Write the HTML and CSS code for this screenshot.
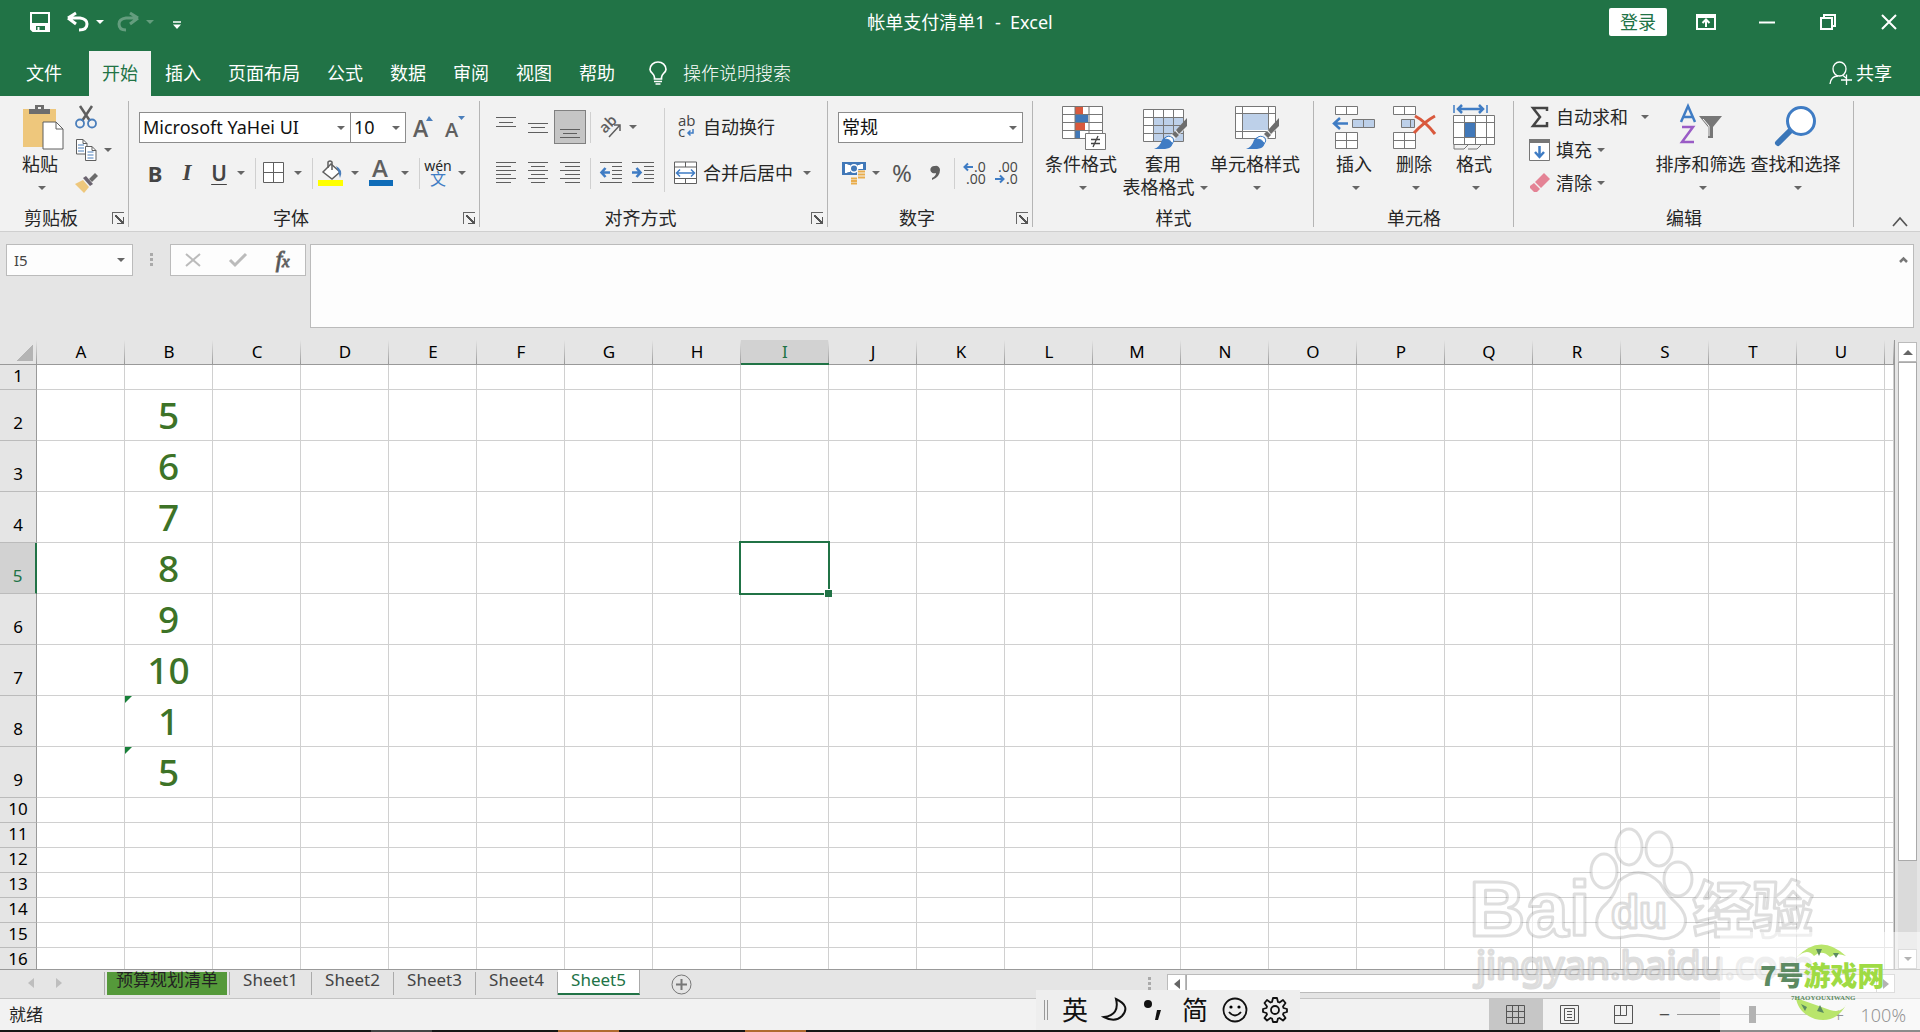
FILE: index.html
```html
<!DOCTYPE html>
<html lang="zh-CN">
<head>
<meta charset="utf-8">
<title>帐单支付清单1 - Excel</title>
<link rel="stylesheet" href="styles.css">
</head>
<body>
<header class="titlebar">
  <div class="quick">
    <button class="tb" aria-label="保存"><svg width="20" height="20" viewBox="0 0 20 20"><path d="M1 1H19V19H3L1 17Z" fill="none" stroke="#fff" stroke-width="2"/><path d="M1 11H19V19H15V14H6V19H3L1 17Z" fill="#fff"/><path d="M8.500 15V19" stroke="#fff" stroke-width="2"/></svg></button>
    <button class="tb undo" aria-label="撤消"><svg width="22" height="20" viewBox="0 0 22 20"><path d="M1 6L9 1M1 6L9 12M2 6H13Q20 7 20 12Q20 18 12 18" fill="none" stroke="#fff" stroke-width="3"/></svg></button>
    <button class="drop light" aria-label="撤消列表"></button>
    <button class="tb redo faint" aria-label="恢复"><svg width="22" height="20" viewBox="0 0 22 20"><path d="M21 6L13 1M21 6L13 12M20 6H9Q2 7 2 12Q2 18 9 18" fill="none" stroke="#fff" stroke-width="3"/></svg></button>
    <button class="drop light faint" aria-label="恢复列表"></button>
    <button class="tb custom" aria-label="自定义快速访问工具栏"><svg width="8" height="8" viewBox="0 0 8 8"><path d="M0 1H8" stroke="#fff" stroke-width="1.500"/><path d="M0 3.500H8L4 8Z" fill="#fff"/></svg></button>
  </div>
  <h1>帐单支付清单1&nbsp; -&nbsp; Excel</h1>
  <div class="window">
    <button class="login">登录</button>
    <button class="win" aria-label="功能区显示选项"><svg width="20" height="16" viewBox="0 0 20 16"><path d="M1 1H19V15H1ZM1 3H19" fill="none" stroke="#fff" stroke-width="2"/><path d="M10 13V6M6.500 9L10 5.500L13.500 9" fill="none" stroke="#fff" stroke-width="2"/></svg></button>
    <button class="win" aria-label="最小化"><svg width="16" height="16" viewBox="0 0 16 16"><path d="M0 8.500H16" stroke="#fff" stroke-width="2"/></svg></button>
    <button class="win" aria-label="还原"><svg width="16" height="16" viewBox="0 0 16 16"><path d="M1 4H12V15H1ZM4 4V1H15V12H12" fill="none" stroke="#fff" stroke-width="2"/></svg></button>
    <button class="win" aria-label="关闭"><svg width="16" height="16" viewBox="0 0 16 16"><path d="M1 1L15 15M15 1L1 15" stroke="#fff" stroke-width="2"/></svg></button>
  </div>
</header>
<nav class="tabs">
  <button class="file">文件</button><button class="on">开始</button><button>插入</button><button>页面布局</button><button>公式</button><button>数据</button><button>审阅</button><button>视图</button><button>帮助</button>
  <button class="tell"><svg width="18" height="24" viewBox="0 0 18 24"><path d="M5.500 18V16.500Q5.500 14.500 3.500 12.500Q1 10 1 8.500A8 7.500 0 0 1 17 8.500Q17 10 14.500 12.500Q12.500 14.500 12.500 16.500V18Z" fill="none" stroke="#fff" stroke-width="1.700"/><path d="M5 20.500H13M6.500 23H11.500" stroke="#fff" stroke-width="1.700"/></svg>操作说明搜索</button>
  <button class="share"><svg width="23" height="24" viewBox="0 0 23 24"><g fill="none" stroke="#fff" stroke-width="1.300"><ellipse cx="10.500" cy="8" rx="6.500" ry="7"/><path d="M1 23Q2 15 9 15M14 14.500L17 17M12 19H23M17.500 13.500V24"/></g></svg>共享</button>
</nav>

<section class="ribbon">
  <div class="group clip">
    <div class="body">
      <button class="big"><svg width="42" height="46" viewBox="0 0 42 46"><path d="M1 5H34V43H1Z" fill="#eec77c"/><path d="M7 10V5H13V1H22V5H28V10Z" fill="#6d6d6d"/><rect x="16" y="3" width="3" height="2" fill="#f2f2f2"/><path d="M21 18H34L41 25V45H21Z" fill="#fff" stroke="#5f5f5f"/><path d="M34 18V25H41" fill="none" stroke="#5f5f5f"/></svg><span>粘贴</span><i class="tri"></i></button>
      <div class="stack">
        <div class="line"><button class="ib" aria-label="剪切"><svg width="22" height="22" viewBox="0 0 22 22"><path d="M5 0L15 15M17 0L7 15" stroke="#5f5f5f" stroke-width="2.500"/><g fill="none" stroke="#4a7ebb" stroke-width="1.800"><circle cx="5" cy="17.500" r="4"/><circle cx="17" cy="17.500" r="4"/></g></svg></button></div>
        <div class="line"><button class="ib" aria-label="复制"><svg width="22" height="22" viewBox="0 0 22 22"><g fill="#fff" stroke="#5f5f5f"><path d="M1.500 .5H8L12 4.500V15H1.500Z"/><path d="M10.500 7.500H17L21 11.500V21.500H10.500Z"/><path d="M8 .5V4.500H12M17 7.500V11.500H21" fill="none"/></g><path d="M3 6H9M3 9H9M3 12H9M12.500 13H18.500M12.500 16H18.500M12.500 19H18.500" stroke="#4a7ebb"/></svg></button><button class="drop" aria-label="复制选项"></button></div>
        <div class="line"><button class="ib" aria-label="格式刷"><svg width="24" height="22" viewBox="0 0 24 22"><path d="M1 12L9 8L15 15L10 21Z" fill="#eec77c"/><path d="M9 6L12 4L19 12L16 14Z" fill="#6b6470"/><path d="M15 7L21 1L24 4L18 10Z" fill="#6b6b6b"/></svg></button></div>
      </div>
    </div>
    <div class="name"><span>剪贴板</span><button class="launch" aria-label="剪贴板设置"></button></div>
  </div>

  <div class="group font">
    <div class="body col">
      <div class="row">
        <label class="combo face"><select aria-label="字体"><option>Microsoft YaHei UI</option></select></label><label class="combo size"><select aria-label="字号"><option>10</option></select></label>
        <button class="ib" aria-label="增大字号"><svg width="22" height="22" viewBox="0 0 22 22"><text x="0" y="21" font-size="23" class="glyph">A</text><path d="M13 5L16 0L20 5Z" fill="#4a7ebb"/></svg></button>
        <button class="ib" aria-label="减小字号"><svg width="22" height="22" viewBox="0 0 22 22"><text x="0" y="21" font-size="20" class="glyph">A</text><path d="M13 0H20L16.500 4Z" fill="#4a7ebb"/></svg></button>
      </div>
      <div class="row">
        <button class="ib bold">B</button><button class="ib ital">I</button><button class="ib under">U</button><button class="drop" aria-label="下划线选项"></button><i class="sep"></i>
        <button class="ib wide" aria-label="边框"><svg width="22" height="22" viewBox="0 0 22 22"><path d="M.5 .5H20.500V20.500H.5ZM10.500 0V21M0 10.500H21" fill="#fff" stroke="#5f5f5f"/></svg></button><button class="drop" aria-label="边框选项"></button><i class="sep"></i>
        <button class="ib wide" aria-label="填充颜色"><svg width="26" height="26" viewBox="0 0 26 26"><path d="M5 12L13 4L22 12L14 19Z" fill="#fff" stroke="#5f5f5f" stroke-width="1.500"/><path d="M10 8V2Q12 0 14 2V10" fill="none" stroke="#5f5f5f" stroke-width="1.500"/><path d="M18 6Q26 10 22 18Q21 12 18 6" fill="#4a7ebb"/><path d="M0 20H25V26H0Z" fill="#ff0"/></svg></button><button class="drop" aria-label="填充颜色选项"></button><i class="sep none"></i>
        <button class="ib wide" aria-label="字体颜色"><svg width="26" height="26" viewBox="0 0 26 26"><text x="4" y="17" font-size="24" class="glyph">A</text><path d="M1 20H25V26H1Z" fill="#0f6cb8"/></svg></button><button class="drop" aria-label="字体颜色选项"></button><i class="sep"></i>
        <button class="ib wide wen" aria-label="拼音指南"><span>wén</span><b>文</b></button><button class="drop" aria-label="拼音选项"></button>
      </div>
    </div>
    <div class="name"><span>字体</span><button class="launch" aria-label="字体设置"></button></div>
  </div>

  <div class="group align">
    <div class="body">
      <div class="col">
        <div class="row">
          <button class="ib" aria-label="顶端对齐"><svg width="20" height="24" viewBox="0 0 20 24"><path d="M0 2.500H20M3 7.500H17M0 11.500H20" stroke="#5f5f5f"/></svg></button>
          <button class="ib" aria-label="垂直居中"><svg width="20" height="24" viewBox="0 0 20 24"><path d="M0 8.500H20M3 12.500H17M0 17.500H20" stroke="#5f5f5f"/></svg></button>
          <button class="ib pressed" aria-label="底端对齐"><svg width="20" height="24" viewBox="0 0 20 24"><path d="M0 14.500H20M3 18.500H17M0 22.500H20" stroke="#5f5f5f"/></svg></button><i class="sep even"></i>
          <button class="ib" aria-label="方向"><svg width="22" height="22" viewBox="0 0 22 22"><text transform="translate(5 18) rotate(-45)" font-size="15" class="glyph">ab</text><path d="M9 21L20 9M20 15V9H14" fill="none" stroke="#5f5f5f" stroke-width="1.500"/></svg></button><button class="drop" aria-label="方向选项"></button>
        </div>
        <div class="row">
          <button class="ib" aria-label="左对齐"><svg width="20" height="22" viewBox="0 0 20 22"><path d="M0 .5H20M0 4.500H15M0 8.500H20M0 12.500H15M0 16.500H20M0 20.500H15" stroke="#5f5f5f"/></svg></button>
          <button class="ib" aria-label="居中"><svg width="20" height="22" viewBox="0 0 20 22"><path d="M0 .5H20M3 4.500H17M0 8.500H20M3 12.500H17M0 16.500H20M3 20.500H17" stroke="#5f5f5f"/></svg></button>
          <button class="ib" aria-label="右对齐"><svg width="20" height="22" viewBox="0 0 20 22"><path d="M0 .5H20M5 4.500H20M0 8.500H20M5 12.500H20M0 16.500H20M5 20.500H20" stroke="#5f5f5f"/></svg></button><i class="sep even"></i>
          <button class="ib" aria-label="减少缩进量"><svg width="22" height="22" viewBox="0 0 22 22"><path d="M0 .5H22M12 4.500H22M12 8.500H22M12 12.500H22M12 16.500H22M0 20.500H22" stroke="#5f5f5f"/><path d="M10 10.500H2M5.500 6L1.500 10.500L5.500 15" fill="none" stroke="#3f7cc4" stroke-width="2.600"/></svg></button>
          <button class="ib" aria-label="增加缩进量"><svg width="22" height="22" viewBox="0 0 22 22"><path d="M0 .5H22M12 4.500H22M12 8.500H22M12 12.500H22M12 16.500H22M0 20.500H22" stroke="#5f5f5f"/><path d="M0 10.500H8M4.500 6L8.500 10.500L4.500 15" fill="none" stroke="#3f7cc4" stroke-width="2.600"/></svg></button>
        </div>
      </div>
      <i class="sep tall"></i>
      <div class="col texts">
        <div class="row"><button class="tx"><svg width="24" height="24" viewBox="0 0 24 24"><text x="4" y="11" font-size="15" class="glyph thin">ab</text><text x="4" y="22" font-size="15" class="glyph thin">c</text><path d="M19 14V18H14M16.500 15.500L14 18L16.500 20.500" fill="none" stroke="#3f7cc4" stroke-width="1.500"/></svg>自动换行</button></div>
        <div class="row"><button class="tx"><svg width="24" height="24" viewBox="0 0 24 24"><path d="M.5 1H22.500V22.500H.5ZM.5 6H22.500M.5 17.500H22.500M11.500 1V6M11.500 17.500V22.500" fill="#fff" stroke="#5f5f5f"/><path d="M3 12H20M6 8.500L2.500 12L6 15.500M17 8.500L20.500 12L17 15.500" fill="none" stroke="#3f7cc4" stroke-width="1.500"/></svg>合并后居中</button><button class="drop far" aria-label="合并选项"></button></div>
      </div>
    </div>
    <div class="name"><span>对齐方式</span><button class="launch" aria-label="对齐设置"></button></div>
  </div>

  <div class="group number">
    <div class="body col">
      <div class="row"><label class="combo format"><select aria-label="数字格式"><option>常规</option></select></label></div>
      <div class="row">
        <button class="ib" aria-label="会计数字格式"><svg width="24" height="24" viewBox="0 0 24 24"><path d="M0 1H24V14H0Z" fill="#4178b8"/><path d="M3 3H7Q3 4 3 7ZM17 3H21V7Q21 4 17 3M3 8Q3 11 7 12H3Z" fill="#fff"/><path d="M3 4H8V11H3ZM16 4H21V8H16Z" fill="#fff"/><circle cx="12" cy="7.500" r="4.500" fill="#fff"/><circle cx="12" cy="7.500" r="3" fill="#4178b8"/><path d="M15 9H24V22H9V15H15Z" fill="#f2f2f2"/><path d="M16 10.500H23M16 13.500H23M16 16.500H23M9 17.500H15M9 20H15M9 22.500H15" stroke="#e9ad4d" stroke-width="2"/></svg></button><button class="drop" aria-label="货币选项"></button>
        <button class="ib pct">%</button><button class="ib comma" aria-label="千位分隔样式"><svg width="9" height="14" viewBox="0 0 9 14"><path d="M4 0A4 4 0 0 1 9 4Q9 11 1 14V12Q5 10 5 7A4 3.700 0 1 1 4 0" fill="#5f5f5f"/></svg></button><i class="sep even"></i>
        <button class="ib" aria-label="增加小数位数"><svg width="24" height="24" viewBox="0 0 24 24"><path d="M10 6H2M5 2.500L1.500 6L5 9.500" fill="none" stroke="#3f7cc4" stroke-width="2"/><text x="11" y="11" font-size="14" class="glyph thin">.0</text><text x="3" y="23" font-size="14" class="glyph thin">.00</text></svg></button>
        <button class="ib" aria-label="减少小数位数"><svg width="24" height="24" viewBox="0 0 24 24"><text x="3" y="11" font-size="14" class="glyph thin">.00</text><path d="M0 18H8M5 14.500L8.500 18L5 21.500" fill="none" stroke="#3f7cc4" stroke-width="2"/><text x="11" y="23" font-size="14" class="glyph thin">.0</text></svg></button>
      </div>
    </div>
    <div class="name"><span>数字</span><button class="launch" aria-label="数字设置"></button></div>
  </div>

  <div class="group styles">
    <div class="body">
      <button class="big w80"><svg width="44" height="46" viewBox="0 0 44 46"><path d="M.5 2.500H40.500V34.500H.5Z" fill="#fff"/><path d="M13 3H21V10H13ZM13 19H23V26H13Z" fill="#d9593d"/><path d="M13 11H26V18H13ZM13 27H18V34H13Z" fill="#4178b8"/><path d="M.5 2.500H40.500V34.500H.5ZM0 10.500H40M0 18.500H40M0 26.500H40M13 2V34M27 2V34" fill="none" stroke="#777"/><path d="M23.500 29.500H43.500V45.500H23.500Z" fill="#fff" stroke="#777"/><path d="M29 35.500H38M29 39.500H38M36 32L31 43" stroke="#444" stroke-width="1.300"/></svg><span>条件格式</span><i class="tri"></i></button>
      <button class="big w84"><svg width="46" height="46" viewBox="0 0 46 46"><path d="M.5 5.500H40.500V37.500H.5Z" fill="#fff"/><path d="M11 14H40V37H11Z" fill="#bdd0e9"/><path d="M.5 5.500H40.500V37.500H.5ZM0 13.500H40M0 21.500H40M0 29.500H40M10.500 5V37M20.500 5V37M30.500 5V37" fill="none" stroke="#777"/><use href="#brush"/></svg><span>套用</span><span class="second">表格格式<i class="tri"></i></span></button>
      <button class="big w100"><svg width="46" height="46" viewBox="0 0 46 46"><path d="M.5 2.500H40.500V34.500H.5Z" fill="#fff"/><path d="M8 10H33V26H8Z" fill="#bdd0e9"/><path d="M.5 2.500H40.500V34.500H.5ZM0 9.500H40M0 27.500H40M7.500 2V34M33.500 2V34" fill="none" stroke="#777"/><g id="brush"><path d="M21 38L40 19L45 13V22L27 40Z" fill="#f2f2f2"/><path d="M33 26L44 14V22L36 30Z" fill="#6d6d6d"/><path d="M29 30L32 27L36 31L33 34Z" fill="#6d6d6d"/><path d="M11 45Q17 43 19 36Q23 30 29 34Q32 44 22 45Z" fill="#3f7cc4"/><path d="M21 35Q25 30 30 34Q32 37 29 40Q28 35 21 35" fill="#fff" stroke="#3f7cc4"/></g></svg><span>单元格样式</span><i class="tri"></i></button>
    </div>
    <div class="name"><span>样式</span></div>
  </div>

  <div class="group cells">
    <div class="body">
      <button class="big w60"><svg width="44" height="46" viewBox="0 0 44 46"><path d="M3.500 2.500H25.500V10.500H3.500ZM14.500 2V10M3.500 28.500H25.500V44.500H3.500ZM3.500 36.500H25.500M14.500 28V44" fill="#fff" stroke="#777"/><path d="M20.500 15.500H42.500V23.500H20.500ZM31.500 15V23" fill="#bdd0e9" stroke="#777"/><path d="M16 19.500H2M8 14L2 19.500L8 25" fill="none" stroke="#3f7cc4" stroke-width="2.500"/></svg><span>插入</span><i class="tri"></i></button>
      <button class="big w60"><svg width="44" height="46" viewBox="0 0 44 46"><path d="M1.500 2.500H23.500V10.500H1.500ZM12.500 2V10M1.500 28.500H23.500V44.500H1.500ZM1.500 36.500H23.500M12.500 28V44" fill="#fff" stroke="#777"/><path d="M9.500 15.500H22.500V23.500H9.500ZM18.500 15V23" fill="#bdd0e9" stroke="#777"/><path d="M23 12Q33 17 43 30M43 12Q32 18 22 29" fill="none" stroke="#d9593d" stroke-width="3"/></svg><span>删除</span><i class="tri"></i></button>
      <button class="big w60"><svg width="42" height="46" viewBox="0 0 42 46"><path d="M1 1V9M34 1V9" stroke="#3f7cc4" stroke-width="1.500"/><path d="M5 5H30M9 1L5 5L9 9M26 1L30 5L26 9" fill="none" stroke="#3f7cc4" stroke-width="2.500"/><path d="M.5 11.500H41.500V40.500H.5ZM0 18.500H41M0 33.500H41M11.500 11V40M22.500 11V40M33.500 11V40" fill="#fff" stroke="#777"/><path d="M12 19H22V33H12Z" fill="#4178b8"/><path d="M1 41V45H11L15 41M15 45H24L28 41" fill="none" stroke="#777"/></svg><span>格式</span><i class="tri"></i></button>
    </div>
    <div class="name"><span>单元格</span></div>
  </div>

  <div class="group edit">
    <div class="body">
      <div class="stack">
        <div class="line"><button class="tx"><svg width="22" height="22" viewBox="0 0 22 22"><path d="M18 5V2H4L11 11L4 20H18V16" fill="none" stroke="#444" stroke-width="2.500"/></svg>自动求和</button><button class="drop far" aria-label="求和选项"></button></div>
        <div class="line"><button class="tx"><svg width="22" height="22" viewBox="0 0 22 22"><path d="M.5 .5H20.500V21.500H.5Z" fill="#fff" stroke="#777"/><path d="M0 0H21V4H0Z" fill="#777"/><path d="M10.500 7V18M6 13L10.500 18L15 13" fill="none" stroke="#3f7cc4" stroke-width="2.500"/></svg>填充</button><button class="drop" aria-label="填充选项"></button></div>
        <div class="line"><button class="tx"><svg width="22" height="22" viewBox="0 0 22 22"><path d="M6 10L15 1L21 7L12 16Z" fill="#e48395"/><path d="M5 11L11 17L8 20H5L1 16V14Z" fill="#e48395"/></svg>清除</button><button class="drop" aria-label="清除选项"></button></div>
      </div>
      <button class="big w95"><svg width="44" height="46" viewBox="0 0 44 46"><path d="M2 18L9 2L16 18M4 13H14" fill="none" stroke="#3f7cc4" stroke-width="2.500"/><path d="M3 23H14L3 38H15" fill="none" stroke="#9a5cc6" stroke-width="2.500"/><path d="M20 12H43L34 23V34H29V23Z" fill="#777"/><path d="M24 15L30 22V32" fill="none" stroke="#fff"/></svg><span>排序和筛选</span><i class="tri"></i></button>
      <button class="big w95"><svg width="44" height="46" viewBox="0 0 44 46"><path d="M17 26L4 39" stroke="#3a76b8" stroke-width="6" stroke-linecap="round"/><circle cx="27" cy="17" r="13.500" fill="#fff" stroke="#3f7cc4" stroke-width="3"/></svg><span>查找和选择</span><i class="tri"></i></button>
    </div>
    <div class="name"><span>编辑</span></div>
  </div>
  <button class="collapse" aria-label="折叠功能区"><svg width="16" height="10" viewBox="0 0 16 10"><path d="M1 9L8 1L15 9" fill="none" stroke="#555" stroke-width="1.700"/></svg></button>
</section>

<section class="formula">
  <label class="namebox"><input aria-label="名称框" value="I5"><i class="tri"></i></label>
  <i class="grip"></i>
  <div class="fx">
    <button aria-label="取消"><svg width="16" height="14" viewBox="0 0 16 14"><path d="M1 1L15 13M15 1L1 13" stroke="#bbb" stroke-width="2"/></svg></button>
    <button aria-label="输入"><svg width="18" height="14" viewBox="0 0 18 14"><path d="M1 7L6 12L17 1" fill="none" stroke="#bbb" stroke-width="3"/></svg></button>
    <button class="fn" aria-label="插入函数">f<small>x</small></button>
  </div>
  <div class="entry"><textarea aria-label="编辑栏"></textarea><svg width="9" height="6" viewBox="0 0 9 6"><path d="M1 5L4.500 1.500L8 5" fill="none" stroke="#777" stroke-width="2.500"/></svg></div>
</section>

<main class="sheet">
  <div class="grid"><table id="cells"></table></div>
  <div class="vscroll"><button aria-label="向上滚动"><i class="up"></i></button><div class="track"><div class="thumb"></div></div><button aria-label="向下滚动"><i class="tri"></i></button></div>
</main>

<footer class="sheetbar">
  <div class="arrows"><i class="left"></i><i class="right"></i></div>
  <nav class="sheets"><button class="plan">预算规划清单</button><button>Sheet1</button><button>Sheet2</button><button>Sheet3</button><button>Sheet4</button><button class="on">Sheet5</button></nav>
  <button class="add" aria-label="新工作表"><svg width="21" height="21" viewBox="0 0 21 21"><circle cx="10.500" cy="10.500" r="9.500" fill="none" stroke="#777"/><path d="M10.500 5V16M5 10.500H16" stroke="#777" stroke-width="2"/></svg></button>
  <i class="grip"></i>
  <div class="hscroll"><button aria-label="向左滚动"><i class="left"></i></button><div class="thumb"></div><button aria-label="向右滚动"><i class="right"></i></button></div>
</footer>
<footer class="status">
  <span class="ready">就绪</span>
  <button class="view on" aria-label="普通"><svg width="20" height="20" viewBox="0 0 20 20"><path d="M.5 .5H18.500V18.500H.5ZM6.500 0V19M12.500 0V19M0 6.500H19M0 12.500H19" fill="none" stroke="#555"/></svg></button>
  <button class="view" aria-label="页面布局"><svg width="20" height="20" viewBox="0 0 20 20"><path d="M.5 .5H18.500V18.500H.5ZM4.500 3.500H14.500V15.500H4.500ZM7 6.500H12M7 9.500H12M7 12.500H12" fill="none" stroke="#555"/></svg></button>
  <button class="view" aria-label="分页预览"><svg width="20" height="20" viewBox="0 0 20 20"><path d="M.5 .5H18.500V18.500H.5ZM.5 10.500H12.500V.5M6.500 .5V10.500" fill="none" stroke="#555"/></svg></button>
  <span class="zoom"><button aria-label="缩小">−</button><input type="range" aria-label="缩放" min="0" max="100" value="51"><button aria-label="放大">+</button></span>
  <span class="percent">100%</span>
</footer>
<div class="taskbar"><i class="t1"></i><i class="t2"></i><i class="t3"></i></div>

<div class="ime"><i class="bar"></i><span>英</span>
  <svg width="26" height="26" viewBox="0 0 26 26"><path d="M14 2Q29 9 20 19Q13 26 2 20Q18 18 14 2Z" fill="none" stroke="#111" stroke-width="2"/></svg>
  <svg width="26" height="26" viewBox="0 0 26 26"><circle cx="6" cy="7" r="4" fill="#111"/><path d="M15 13H19L16 23H13Z" fill="#111"/></svg>
  <span>简</span>
  <svg width="26" height="26" viewBox="0 0 26 26"><circle cx="13" cy="13" r="11.500" fill="none" stroke="#111" stroke-width="1.800"/><circle cx="9" cy="10" r="1.600"/><circle cx="17" cy="10" r="1.600"/><path d="M7 15Q13 22 19 15" fill="none" stroke="#111" stroke-width="1.800"/></svg>
  <svg width="26" height="26" viewBox="0 0 26 26"><g fill="none" stroke="#111" stroke-width="1.800" stroke-linejoin="round"><circle cx="13" cy="13" r="4"/><path d="M11 1H15L16 5L17.500 5.500L21 3L23.500 6L21 9.500L21.500 11L25 12V15L21.500 16L21 17.500L23.500 21L21 23.500L17.500 21L16 21.500L15 25H11L10 21.500L8.500 21L5 23.500L2.500 21L5 17.500L4.500 16L1 15V12L4.500 11L5 9.500L2.500 6L5 3L8.500 5.500L10 5Z"/></g></svg>
</div>

<svg class="mark" width="350" height="180" viewBox="0 0 350 180" aria-hidden="true">
  <g fill="#fff" fill-opacity=".6" stroke="#888" stroke-opacity=".28" stroke-width="3" stroke-linejoin="round">
    <text x="0" y="115" font-size="78" font-weight="700" class="arial">Bai</text>
    <ellipse cx="135" cy="50" rx="13" ry="17"/><ellipse cx="160" cy="26" rx="13" ry="18"/><ellipse cx="190" cy="28" rx="13" ry="17"/><ellipse cx="209" cy="58" rx="14" ry="17"/>
    <path d="M150 60Q171 42 191 62Q198 74 208 83Q222 97 213 110Q203 120 188 117Q170 112 155 116Q133 120 128 105Q126 92 138 82Q146 74 150 60Z"/>
    <text x="142" y="107" font-size="46" font-weight="700" class="arial">du</text>
    <text x="224" y="111" font-size="60" font-weight="900" class="cjk">经验</text>
    <text x="7" y="158" font-size="39" class="noto">jingyan.baidu.com</text>
  </g>
</svg>
<div class="brand" aria-hidden="true"><svg width="200" height="100" viewBox="0 0 200 100">
  <path d="M76 26Q100 0 126 24Q116 20 110 25Q102 17 94 24Q87 15 76 26ZM76 66Q96 73 110 78Q122 82 127 71Q117 92 95 87Q78 81 76 66Z" fill="#b9e56c"/>
  <path d="M96 17H102L99 24ZM113 21H119L116 26ZM81 72L87 75L85 79ZM97 79L100 73L104 81Z" fill="#5c8c60"/>
  <text x="40" y="54" font-size="27" font-weight="900" class="cjk"><tspan fill="#5d8a62">7号</tspan><tspan fill="#9fdb44">游戏网</tspan></text>
  <text x="71" y="68" font-size="7" font-weight="700" fill="#5d8a62" class="serif">7HAOYOUXIWANG</text>
</svg></div>
<script src="grid.js"></script>
</body>
</html>
```
FILE: styles.css
```css
* { box-sizing: border-box; }
body { margin: 0; height: 100vh; display: flex; flex-direction: column; overflow: hidden; position: relative; background: #e5e5e5; color: #262626; font: 18px/22px "Noto Sans", "Noto Sans CJK SC", sans-serif; }
button, select, input, textarea { font: inherit; color: inherit; border: 0; padding: 0; margin: 0; background: none; border-radius: 0; outline: 0; }
button { display: flex; align-items: center; justify-content: center; white-space: nowrap; flex: none; }
svg { display: block; flex: none; overflow: visible; }
h1 { margin: 0; font-size: 18px; font-weight: 400; }

.titlebar { display: grid; grid-template-columns: 1fr auto 1fr; align-items: center; height: 44px; flex: none; background: #217346; color: #fff; }
.quick { display: flex; align-items: center; padding-left: 24px; }
.tb { width: 32px; height: 32px; }
.undo, .redo { margin-left: 6px; }
.quick .redo { margin-left: 6px; }
.custom { margin-left: 5px; padding-top: 6px; }
.faint { opacity: .3; }
.window { display: flex; justify-content: flex-end; align-items: center; padding-right: 1px; }
.login { width: 58px; height: 28px; margin-right: 8px; background: #fff; color: #217346; border-radius: 2px; }
.win { width: 61px; height: 32px; }

.tabs { display: flex; gap: 1px; height: 52px; padding-top: 7px; flex: none; background: #217346; color: #fff; }
.tabs button { padding: 0 13px 2px; }
.tabs .file { width: 88px; }
.tabs .on { background: #f2f2f2; color: #217346; }
.tabs .tell { gap: 16px; padding-left: 20px; font-weight: 300; }
.tabs .share { gap: 4px; margin-left: auto; padding-right: 28px; }

.ribbon { display: flex; height: 136px; flex: none; background: #f2f2f2; border-bottom: 1px solid #cfcfcf; }
.group { position: relative; display: flex; flex-direction: column; flex: none; padding-top: 8px; }
.group::after { content: ""; position: absolute; right: 0; top: 5px; bottom: 4px; width: 1px; background: #b5b5b5; }
.clip { width: 129px; } .font { width: 351px; } .align { width: 348px; } .number { width: 205px; }
.styles { width: 281px; } .cells { width: 200px; } .edit { width: 340px; }
.body { display: flex; align-items: flex-start; height: 103px; padding-left: 10px; }
.styles .body { padding-left: 8px; }
.col { display: flex; flex-direction: column; }
.row { display: flex; align-items: center; height: 46px; }
.stack { display: flex; flex-direction: column; gap: 7px; }
.line { display: flex; align-items: center; height: 26px; }
.name { display: flex; align-items: center; height: 22px; text-align: center; }
.name span { flex: 1; }
.clip .name, .font .name, .align .name, .number .name { padding-right: 5px; }
.launch { width: 22px; height: 11px; padding-left: 10px; }
.launch::before { content: ""; width: 11px; height: 11px; border: solid #666; border-width: 1px 0 0 1px; background: linear-gradient(#555, #555) right bottom / 1px 7px no-repeat, linear-gradient(#555, #555) right bottom / 7px 1px no-repeat, linear-gradient(to bottom left, transparent 43%, #555 43% 57%, transparent 57%) 2px 2px / 8px 8px no-repeat; }
.tri, .drop::before, .combo::after { content: ""; display: block; width: 0; height: 0; border: 4px solid transparent; border-top-color: #666; border-bottom: 0; }
.drop { width: 12px; height: 26px; }
.drop.light::before { border-top-color: #fff; }
.drop.far { margin-left: 8px; }
.ib { width: 32px; height: 34px; }
.ib.wide { width: 36px; }
.pressed { background: #c5c5c5; border: 1px solid #808080; }
.sep { width: 1px; height: 31px; margin-left: 8px; background: #d0d0d0; }
.sep.none { width: 2px; margin: 0; background: none; }
.sep.even { margin: 0 4px; }
.sep.tall { height: 84px; margin: 4px 0 0 5px; }
.glyph { font-family: "Open Sans", sans-serif; font-weight: 600; fill: #5f5f5f; }
.glyph.thin { font-weight: 400; fill: #444; }
.big { flex-direction: column; justify-content: flex-start; width: 60px; height: 96px; line-height: 23px; }
.big svg { margin-bottom: 3px; }
.clip .big svg, .styles .big svg { margin-left: 5px; }
.big > .tri { margin: 10px 0 0 4px; }
.second { display: flex; align-items: center; gap: 5px; padding-left: 4px; }
.w80 { width: 80px; } .w84 { width: 84px; } .w100 { width: 100px; } .w95 { width: 95px; }
.combo { position: relative; display: flex; height: 31px; background: #fff; border: 1px solid #8c8c8c; color: #111; }
.combo select { appearance: none; width: 100%; padding-left: 3px; }
.combo::after { position: absolute; right: 5px; top: 13px; }
.face { width: 212px; } .size { width: 56px; margin: 0 2px 0 -1px; } .format { width: 185px; }
.bold { font-weight: 700; font-size: 22px; color: #444; }
.ital { font: italic 700 23px "Liberation Serif", serif; color: #444; }
.under { font-weight: 600; font-size: 21px; color: #444; text-decoration: underline; text-decoration-thickness: 1px; text-underline-offset: 3px; }
.wen { flex-direction: column; font-size: 14px; line-height: 11px; }
.wen b { font-size: 16px; line-height: 16px; font-weight: 400; color: #3f7cc4; }
.tx { gap: 5px; }
.texts { padding-left: 9px; }
.edit .tx { gap: 5px; margin-right: 3px; }
.edit .body { padding-left: 15px; }
.edit .stack { width: 124px; flex: none; }
.pct { width: 40px; font-size: 24px; color: #555; }
.comma { width: 26px; margin-right: 2px; }
.collapse { margin: auto 12px 4px auto; }

.formula { display: flex; align-items: flex-start; height: 108px; padding: 12px 6px; flex: none; }
.namebox { display: flex; align-items: center; width: 127px; height: 32px; padding: 0 7px; background: #fdfdfd; border: 1px solid #bbb; font-size: 15px; color: #444; }
.namebox input { width: 100%; }
.grip { width: 3px; height: 14px; background: repeating-linear-gradient(#aaa 0 3px, transparent 3px 5px); }
.formula .grip { margin: 9px 17px 0 17px; }
.fx { display: flex; width: 136px; height: 32px; background: #fdfdfd; border: 1px solid #bbb; }
.fx button { flex: 1; }
.fx .fn { font: italic 23px/28px "Liberation Serif", serif; color: #444; -webkit-text-stroke: 1px #666; }
.fn small { font-size: 17px; padding-top: 4px; }
.entry { display: flex; align-items: flex-start; flex: 1; height: 84px; margin-left: 4px; padding: 12px 5px; background: #fdfdfd; border: 1px solid #bbb; }
.entry textarea { flex: 1; height: 58px; resize: none; }

.sheet { display: flex; flex: 1; min-height: 0; overflow: hidden; border-bottom: 1px solid #999; }
.grid { flex: 1; min-width: 0; overflow: hidden; border-right: 1px solid #999; }
table { width: 100%; table-layout: fixed; border-spacing: 0; font-size: 17px; line-height: 22px; color: #000; }
th, td { padding: 0; font-weight: 400; }
thead th { height: 25px; border-bottom: 1px solid #999; background: linear-gradient(#e5e5e5, #999) right / 1px 100% no-repeat #e5e5e5; }
thead th.on { background-color: #d2d2d2; border-bottom: 2px solid #217346; color: #217346; }
thead .corner { position: relative; }
.corner::after { content: ""; position: absolute; right: 4px; bottom: 3px; width: 16px; height: 16px; background: linear-gradient(to bottom right, transparent 50%, #b4b4b4 50%); }
tbody tr { height: 25px; }
tbody tr.tall { height: 51px; }
tbody th { vertical-align: bottom; line-height: 20px; padding-bottom: 3px; background: #e5e5e5; border-right: 1px solid #999; border-bottom: 1px solid #bbb; }
tbody .tall th { padding-bottom: 7px; }
tbody th.on { background: #d2d2d2; color: #217346; border-right: 2px solid #217346; }
td { position: relative; background: #fff; border: solid #d0d0d0; border-width: 0 1px 1px 0; text-align: center; font-size: 37px; font-weight: 500; line-height: 48px; color: #3d7327; }
tr:not(.tall) td { line-height: 20px; }
td.warn::before { content: ""; position: absolute; left: 0; top: 0; border: solid transparent; border-width: 0 7px 7px 0; border-left: 0; border-top: 7px solid #188038; border-bottom: 0; }
td.picked { z-index: 1; }
td.picked::before { content: ""; position: absolute; inset: -2px; border: 2px solid #217346; }
td.picked::after { content: ""; position: absolute; right: -4px; bottom: -4px; width: 7px; height: 7px; background: #217346; border: solid #fff; border-width: 1px 0 0 1px; }
.first { width: 37px; } .c { width: 88px; }
.vscroll { display: flex; flex-direction: column; width: 25px; padding: 2px 3px 0; }
.vscroll button { width: 19px; height: 20px; background: #fff; border: 1px solid #bbb; }
.up { border: 5px solid transparent; border-bottom-color: #666; border-top: 0; }
.track { flex: 1; background: #dadada; }
.vscroll .thumb { height: 85%; background: #fff; border: 1px solid #aaa; }
.left { border: 5px solid transparent; border-right: 6px solid #666; border-left: 0; }
.right { border: 5px solid transparent; border-left: 6px solid #666; border-right: 0; }

.sheetbar { display: flex; align-items: flex-start; height: 29px; flex: none; border-bottom: 1px solid #c4c4c4; font-size: 17px; color: #444; }
.arrows { display: flex; gap: 22px; width: 104px; padding: 8px 0 0 28px; opacity: .3; }
.sheets { display: flex; }
.sheets button { width: 82px; height: 23px; margin-top: 2px; border-right: 1px solid #aaa; padding-bottom: 8px; }
.sheets .plan { width: 126px; color: #222; border-left: 1px solid #aaa; box-shadow: inset 2px 0 #e5e5e5, inset -2px 0 #e5e5e5; background: #55993a; }
.sheets .on { height: 25px; margin-top: 0; background: #fff; color: #217346; border-bottom: 2px solid #217346; padding-bottom: 4px; }
.add { margin: 4px 0 0 31px; }
.sheetbar .grip { margin: 7px 16px 0 auto; }
.hscroll { display: flex; width: 728px; height: 19px; margin: 4px 25px 0 0; background: #fff; border: 1px solid #bbb; border-width: 1px 0; }
.hscroll button { width: 19px; border: 1px solid #bbb; border-width: 0 1px; }
.hscroll .thumb { flex: 1; border-left: 1px solid #aaa; }

.status { display: flex; align-items: center; height: 31px; flex: none; background: #f2f2f2; font-size: 17px; padding-right: 14px; }
.ready { flex: 1; padding-left: 9px; }
.view { width: 54px; height: 31px; }
.view.on { background: #c6c6c6; }
.zoom { display: flex; align-items: center; gap: 6px; padding-left: 8px; }
.zoom button { width: 12px; font-size: 20px; font-weight: 300; }
.zoom input { appearance: none; width: 150px; height: 17px; margin: 0; background: linear-gradient(#999, #999) center / 100% 1px no-repeat; }
.zoom input::-webkit-slider-thumb { appearance: none; width: 7px; height: 17px; background: #666; }
.percent { padding-left: 16px; font-size: 18px; font-weight: 300; }
.taskbar { display: flex; height: 2px; flex: none; background: #161616; }
.taskbar i { height: 2px; width: 61px; background: #444; }
.t1 { margin-left: 371px; } .taskbar .t2, .taskbar .t3 { background: #b06a30; margin-left: 126px; }

.ime { position: absolute; left: 1036px; bottom: 2px; display: flex; align-items: center; gap: 14px; height: 40px; padding: 0 12px 0 8px; background: #eee; color: #111; font-size: 26px; line-height: 30px; }
.ime .bar { width: 4px; height: 20px; border: solid #999; border-width: 0 1px; }
.mark { position: absolute; right: 101px; bottom: 31px; z-index: 2; }
.brand { position: absolute; right: 0; bottom: 0; z-index: 3; background: rgba(255, 255, 255, .5); }
.arial { font-family: "Liberation Sans", sans-serif; }
.noto { font-family: "Noto Sans", sans-serif; }
.cjk { font-family: "Noto Sans CJK SC", sans-serif; }
.serif { font-family: "Liberation Serif", serif; }
```
FILE: grid.js
```js
const letters = 'ABCDEFGHIJKLMNOPQRSTU'.split('');
const values = { 2: 5, 3: 6, 4: 7, 5: 8, 6: 9, 7: 10, 8: 1, 9: 5 };
const active = { col: 'I', row: 5 };
let html = '<colgroup><col class="first">' + letters.map(() => '<col class="c">').join('') + '<col></colgroup>';
html += '<thead><tr><th class="corner"></th>' + letters.map(l => `<th${l === active.col ? ' class="on"' : ''}>${l}</th>`).join('') + '<th></th></tr></thead><tbody>';
for (let r = 1; r <= 16; r++) {
  html += `<tr${values[r] ? ' class="tall"' : ''}><th${r === active.row ? ' class="on"' : ''}>${r}</th>`;
  for (const l of letters) {
    const cls = l === active.col && r === active.row ? ' class="picked"' : l === 'B' && r > 7 && r < 10 ? ' class="warn"' : '';
    html += `<td${cls}>${l === 'B' && values[r] ? values[r] : ''}</td>`;
  }
  html += '<td></td></tr>';
}
document.getElementById('cells').innerHTML = html + '</tbody>';
```
